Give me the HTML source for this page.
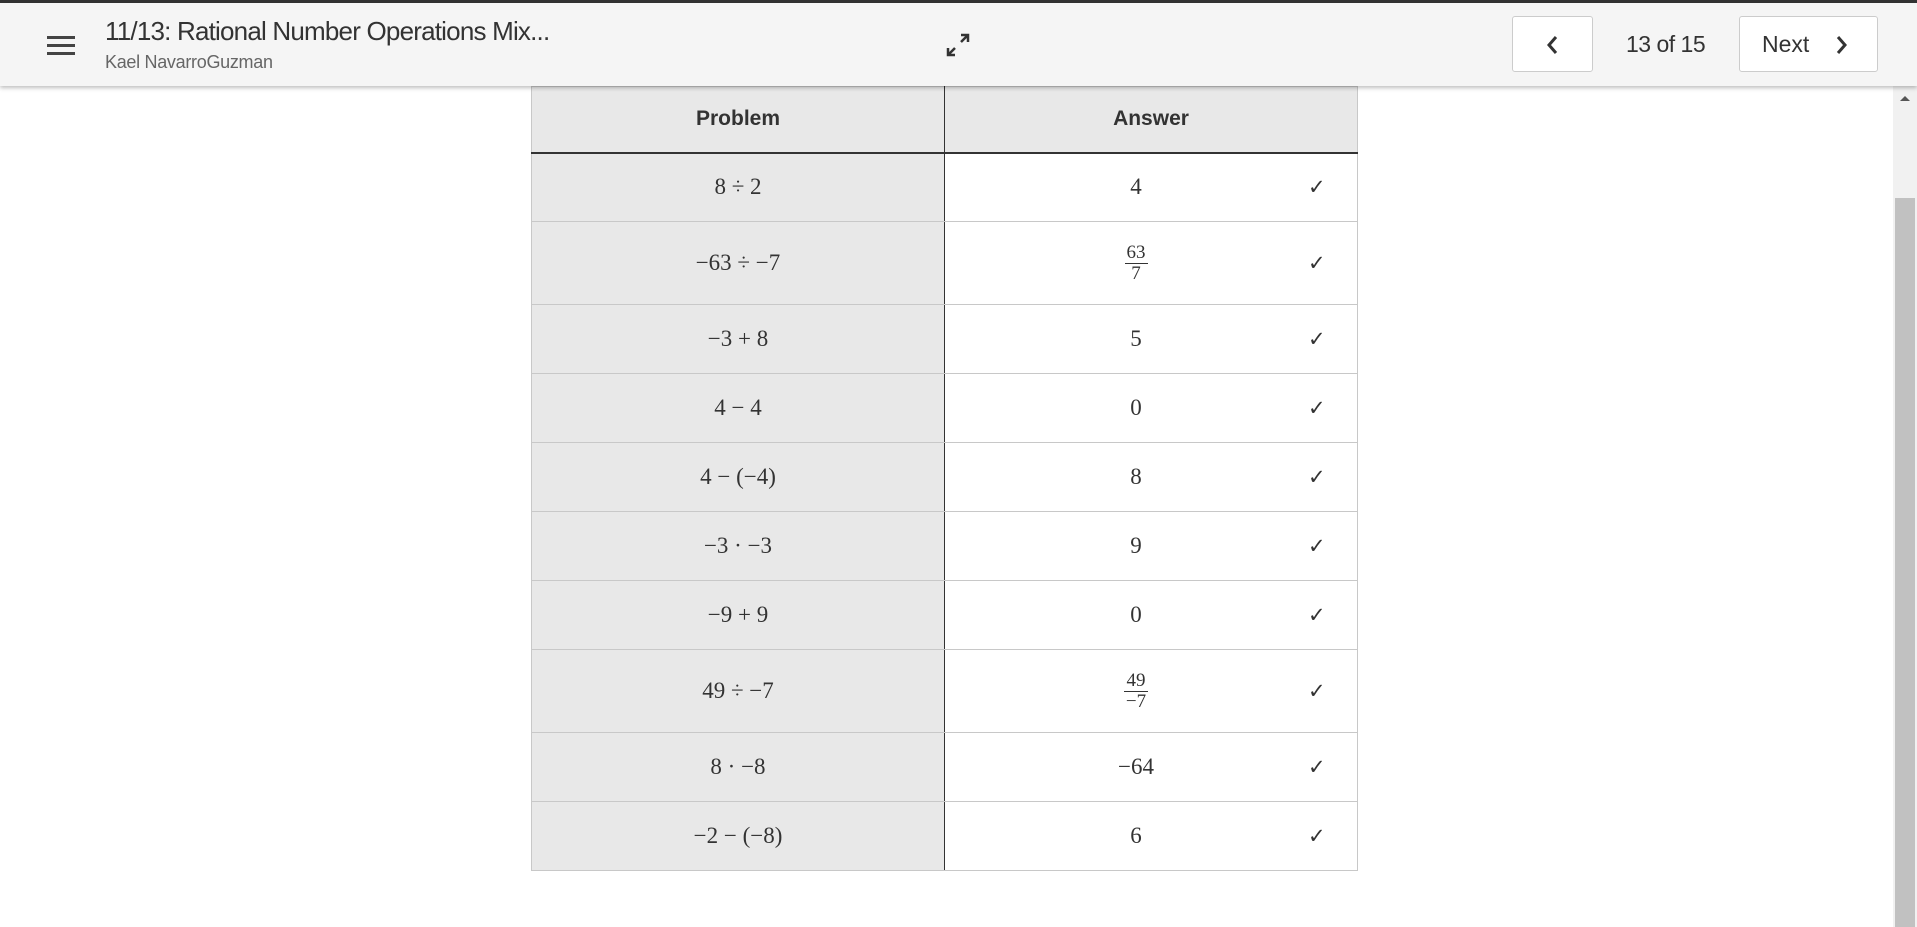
<!DOCTYPE html>
<html><head><style>
*{box-sizing:border-box;margin:0;padding:0}
body{width:1917px;height:927px;background:#fff;position:relative;overflow:hidden;font-family:"Liberation Sans",sans-serif;color:#333}
.top{position:absolute;left:0;top:0;width:1917px;height:3px;background:#333}
.hdr{position:absolute;left:0;top:3px;width:1917px;height:83px;background:#f5f5f5;box-shadow:0 2px 4px rgba(0,0,0,.25);z-index:2}
.ham{position:absolute;left:47px;top:33px;width:28px}
.ham div{height:3px;background:#444;margin-bottom:5px}
.title{position:absolute;left:105px;top:13px;font-size:26px;color:#333;letter-spacing:-0.8px}
.sub{position:absolute;left:105px;top:49px;font-size:18px;color:#666;letter-spacing:-0.3px}
.btn{position:absolute;top:13px;height:56px;border:1px solid #ccc;border-radius:3px;background:#fff}
.cnt{position:absolute;left:1626px;top:28px;font-size:23px;color:#333;letter-spacing:-0.5px}
table{position:absolute;left:531px;top:86px;width:827px;border-collapse:collapse}
td,th{border:1px solid #c8c8c8;text-align:center;font-family:"Liberation Serif",serif;font-size:23px;color:#333;position:relative}
th{font-family:"Liberation Sans",sans-serif;font-weight:bold;font-size:21px;background:#e8e8e8;height:66px;border-bottom:2px solid #333}
td:first-child{background:#e8e8e8;width:413px;border-right:1px solid #333}
th:first-child{border-right:1px solid #333}
td+td{padding-right:30px}
.ck{position:absolute;left:363px;top:50%;transform:translateY(-50%);font-family:"DejaVu Sans",sans-serif;font-size:21px}
.fr{display:inline-block;vertical-align:middle;font-size:19px;line-height:20px}
.fr span{display:block;padding:0 2px}
.fr span:first-child{border-bottom:1px solid #333}
.sb{position:absolute;left:1893px;top:86px;width:24px;height:841px;background:#f1f1f1}
.th{position:absolute;left:1895px;top:198px;width:20px;height:729px;background:#c1c1c1}
</style></head><body>
<div class="top"></div>
<div class="hdr">
<div class="ham"><div></div><div></div><div></div></div>
<div class="title">11/13: Rational Number Operations Mix...</div>
<div class="sub">Kael NavarroGuzman</div>
<svg style="position:absolute;left:944px;top:28px" width="28" height="28" viewBox="0 0 28 28"><path d="M17 4h7v7M24 4l-7 7M11 24H4v-7M4 24l7-7" stroke="#333" stroke-width="2.5" fill="none"/></svg>
<div class="btn" style="left:1512px;width:81px"><svg style="position:absolute;left:32px;top:18px" width="16" height="20"><path d="M11 2L4 10l7 8" stroke="#333" stroke-width="3" fill="none"/></svg></div>
<div class="cnt">13 of 15</div>
<div class="btn" style="left:1739px;width:139px"><span style="position:absolute;left:22px;top:14px;font-size:23px;color:#333">Next</span><svg style="position:absolute;left:93px;top:18px" width="16" height="20"><path d="M5 2l7 8-7 8" stroke="#333" stroke-width="3" fill="none"/></svg></div>
</div>
<table>
<tr><th>Problem</th><th>Answer</th></tr>
<tr style="height:69px"><td>8 ÷ 2</td><td>4<span class="ck">✓</span></td></tr>
<tr style="height:83px"><td>−63 ÷ −7</td><td><span class="fr"><span>63</span><span>7</span></span><span class="ck">✓</span></td></tr>
<tr style="height:69px"><td>−3 + 8</td><td>5<span class="ck">✓</span></td></tr>
<tr style="height:69px"><td>4 − 4</td><td>0<span class="ck">✓</span></td></tr>
<tr style="height:69px"><td>4 − (−4)</td><td>8<span class="ck">✓</span></td></tr>
<tr style="height:69px"><td>−3 · −3</td><td>9<span class="ck">✓</span></td></tr>
<tr style="height:69px"><td>−9 + 9</td><td>0<span class="ck">✓</span></td></tr>
<tr style="height:83px"><td>49 ÷ −7</td><td><span class="fr"><span>49</span><span>−7</span></span><span class="ck">✓</span></td></tr>
<tr style="height:69px"><td>8 · −8</td><td>−64<span class="ck">✓</span></td></tr>
<tr style="height:69px"><td>−2 − (−8)</td><td>6<span class="ck">✓</span></td></tr>
</table>
<div class="sb"></div><div class="th"></div>
<svg style="position:absolute;left:1899px;top:94px" width="12" height="8"><path d="M1 7L6 2l5 5z" fill="#555"/></svg>
</body></html>
